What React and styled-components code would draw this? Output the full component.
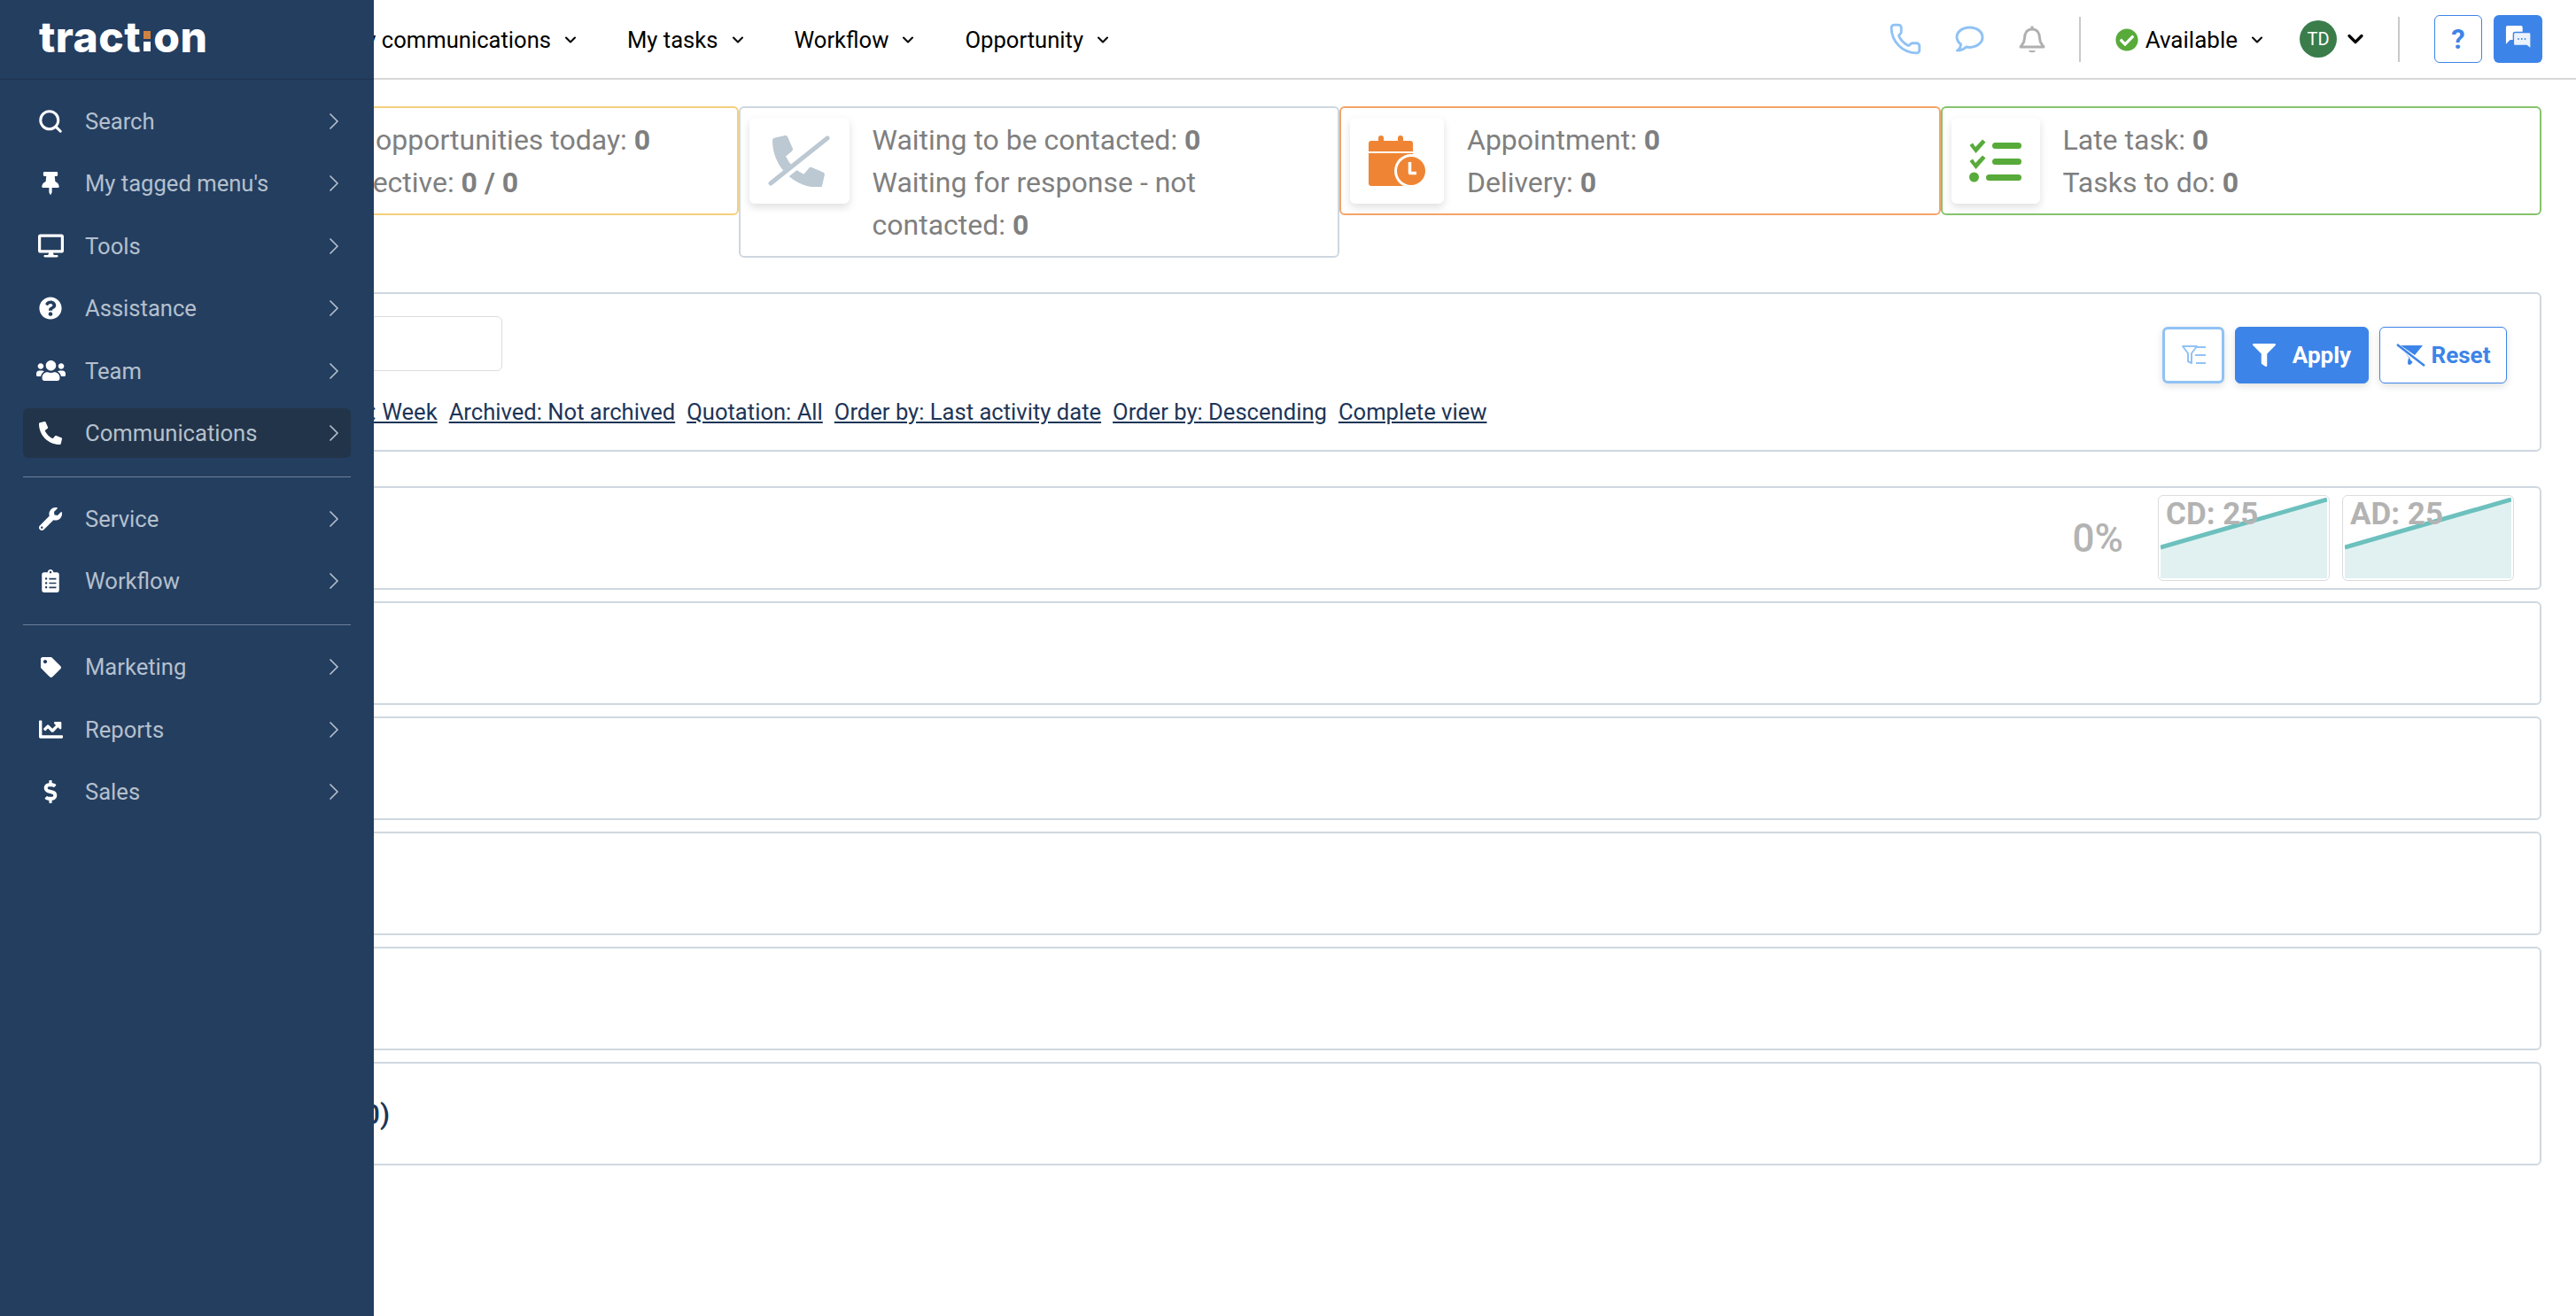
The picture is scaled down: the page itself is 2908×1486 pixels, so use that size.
import React from "react";
import styled, { createGlobalStyle } from "styled-components";
import {
  FaThumbtack,
  FaDesktop,
  FaQuestionCircle,
  FaUsers,
  FaPhoneAlt,
  FaWrench,
  FaClipboardList,
  FaTag,
  FaChartLine,
  FaDollarSign,
  FaFilter,
  FaCheckCircle,
} from "react-icons/fa";
import { ChevronRight, ChevronDown, Phone, Search } from "lucide-react";

const GlobalStyle = createGlobalStyle`
  html, body {
    margin: 0;
    padding: 0;
    background: #fff;
    font-family: Roboto, "Liberation Sans", sans-serif;
    overflow: hidden;
  }
`;

const Page = styled.div`
  position: relative;
  height: 100vh;
  overflow: hidden;
`;

/* sidebar drawer, lies over the page */
const Sidebar = styled.aside`
  position: absolute;
  top: 0;
  left: 0;
  bottom: 0;
  width: 422px;
  background: #243e60;
  z-index: 5;
`;

const LogoBar = styled.div`
  height: 90px;
  box-sizing: border-box;
  border-bottom: 1px solid #20344f;
  padding: 17px 0 0 44px;
`;

const Logo = styled.div`
  font-family: Inter, sans-serif;
  font-weight: 800;
  font-size: 48px;
  line-height: 50px;
  letter-spacing: 0.5px;
  color: #fff;
`;

const LogoI = styled.span`
  position: relative;
  color: transparent;

  &::before {
    content: "";
    position: absolute;
    left: 3px;
    top: 23px;
    width: 8px;
    height: 9px;
    background: #cf8240;
  }

  &::after {
    content: "";
    position: absolute;
    left: 3px;
    top: 35px;
    width: 8px;
    height: 11px;
    background: #fff;
  }
`;

const Menu = styled.nav`
  padding: 19px 26px 0;
`;

const MenuRow = styled.div`
  display: flex;
  align-items: center;
  height: 56px;
  margin-bottom: 14.4px;
  padding: 0 3px 0 11px;
  border-radius: 6px;
  background: ${(p) => (p.$active ? "#223449" : "transparent")};
  color: #b4c0cd;
  font-size: 25.6px;
`;

const MenuIcon = styled.span`
  display: flex;
  justify-content: center;
  width: 40px;
  margin-right: 19px;
  color: #fff;
`;

const MenuArrow = styled.span`
  display: flex;
  margin-left: auto;
  color: #b4c0cd;
`;

const MenuDivider = styled.div`
  height: 1px;
  background: #6c8098;
  margin: 21px 0 19px;
`;

const Header = styled.header`
  display: flex;
  align-items: center;
  height: 90px;
  box-sizing: border-box;
  border-bottom: 2px solid #d8d8d8;
  padding: 2px 38px 0 390px;
`;

const NavItem = styled.div`
  display: flex;
  align-items: center;
  gap: 12px;
  margin-right: 54px;
  color: #000;
  font-size: 25.6px;
`;

const HeaderRight = styled.div`
  display: flex;
  align-items: center;
  margin-left: auto;
  margin-top: -2px;
`;

const HeadIcon = styled.span`
  display: flex;
  color: ${(p) => p.$color};
  margin-right: ${(p) => p.$mr}px;
`;

const VSep = styled.div`
  width: 2px;
  height: 51px;
  background: #c9c9c9;
  margin: 0 ${(p) => p.$mr}px 0 ${(p) => p.$ml}px;
`;

const Status = styled.div`
  display: flex;
  align-items: center;
  padding-top: 2px;
  color: #000;
  font-size: 26px;
`;

const Avatar = styled.div`
  display: flex;
  align-items: center;
  justify-content: center;
  width: 42px;
  height: 42px;
  border-radius: 50%;
  background: #3a7d4b;
  color: #fff;
  font-size: 20px;
  margin: 0 7px 0 38px;
`;

const HelpButton = styled.div`
  display: flex;
  align-items: center;
  justify-content: center;
  width: 54px;
  height: 54px;
  box-sizing: border-box;
  border: 1.5px solid #3d84e8;
  border-radius: 6px;
  color: #3d84e8;
  font-size: 31px;
  font-weight: 700;
`;

const ChatButton = styled.div`
  display: flex;
  align-items: center;
  justify-content: center;
  width: 55px;
  height: 54px;
  margin-left: 13px;
  border-radius: 6px;
  background: #3d84e8;
`;

const Content = styled.main`
  padding: 30px 39px 0 155px;
`;

const Cards = styled.section`
  display: grid;
  grid-template-columns: repeat(4, 1fr);
  align-items: start;
`;

const Card = styled.div`
  display: flex;
  align-items: flex-start;
  box-sizing: border-box;
  padding: 11px 11px 11px 10px;
  border: 2px solid ${(p) => p.$color};
  border-radius: 6px;
`;

const IconBox = styled.div`
  display: flex;
  align-items: center;
  justify-content: center;
  flex: 0 0 ${(p) => p.$w}px;
  height: 97px;
  margin-right: 26px;
  background: #fff;
  border-radius: 6px;
  box-shadow: 0 4px 10px rgba(0, 0, 0, 0.13);
`;

const CardText = styled.div`
  padding-top: 1px;
  color: #7f7f7f;
  font-size: 32px;
  line-height: 48px;

  b {
    font-weight: 700;
  }
`;

const Panel = styled.section`
  margin-top: 39px;
  height: 180px;
  box-sizing: border-box;
  padding: 25px 37px 0 23px;
  border: 2px solid #cfd8e0;
  border-radius: 6px;
`;

const PanelTop = styled.div`
  display: flex;
  justify-content: space-between;
`;

const SearchInput = styled.div`
  width: 387px;
  height: 62px;
  box-sizing: border-box;
  border: 1.5px solid #dcdcdc;
  border-radius: 6px;
`;

const Buttons = styled.div`
  display: flex;
  gap: 12px;
  margin-top: 12px;
`;

const IconButton = styled.div`
  display: flex;
  align-items: center;
  justify-content: center;
  width: 70px;
  height: 64px;
  box-sizing: border-box;
  border: 3px solid #90c2f5;
  border-radius: 6px;
  box-shadow: 0 3px 8px rgba(0, 0, 0, 0.12);
`;

const ActionButton = styled.div`
  display: flex;
  align-items: center;
  justify-content: center;
  gap: ${(p) => p.$gap}px;
  width: ${(p) => p.$w}px;
  height: 64px;
  box-sizing: border-box;
  border: 1.5px solid #3d84e8;
  border-radius: 6px;
  background: ${(p) => (p.$solid ? "#3d84e8" : "#fff")};
  color: ${(p) => (p.$solid ? "#fff" : "#3d84e8")};
  font-size: 26px;
  font-weight: 700;
  box-shadow: 0 3px 8px rgba(0, 0, 0, 0.12);
`;

const Links = styled.div`
  display: flex;
  gap: 13px;
  margin-top: 17px;
  padding-left: 186px;
  white-space: nowrap;
`;

const FilterLink = styled.a`
  color: #1d3557;
  font-size: 25.6px;
  line-height: 30px;
  text-decoration: underline;
`;

const Rows = styled.section`
  display: flex;
  flex-direction: column;
  gap: 13px;
  margin-top: 39px;
`;

const Row = styled.div`
  display: flex;
  align-items: center;
  height: 117px;
  box-sizing: border-box;
  padding: 0 29px 0 37px;
  border: 2px solid #cfd8e0;
  border-radius: 6px;
`;

const RowTitle = styled.div`
  color: #1d3557;
  font-size: 32px;
  font-weight: 500;
`;

const Percent = styled.div`
  margin-left: auto;
  margin-right: 39px;
  color: #b3b3b3;
  font-size: 44px;
  font-weight: 500;
`;

const Chart = styled.div`
  position: relative;
  width: 194px;
  height: 97px;
  box-sizing: border-box;
  padding: 2px;
  border: 1.5px solid #dcdcdc;
  border-radius: 6px;

  & + & {
    margin-left: 14px;
  }

  svg {
    display: block;
  }
`;

const ChartLabel = styled.span`
  position: absolute;
  left: 8px;
  top: 1px;
  color: #b3b3b3;
  font-size: 35px;
  font-weight: 700;
  line-height: 40px;
`;

const menuTop = [
  ["Search", <Search size={30} strokeWidth={2.4} />],
  ["My tagged menu's", <FaThumbtack size={26} />],
  ["Tools", <FaDesktop size={29} />],
  ["Assistance", <FaQuestionCircle size={26} />],
  ["Team", <FaUsers size={33} />],
  ["Communications", <FaPhoneAlt size={26} />, true],
];
const menuMiddle = [
  ["Service", <FaWrench size={26} />],
  ["Workflow", <FaClipboardList size={26} />],
];
const menuBottom = [
  ["Marketing", <FaTag size={23} />],
  ["Reports", <FaChartLine size={27} />],
  ["Sales", <FaDollarSign size={26} />],
];

const filters = [
  "Date: Week",
  "Archived: Not archived",
  "Quotation: All",
  "Order by: Last activity date",
  "Order by: Descending",
  "Complete view",
];

const PHONE =
  "M497.39 361.8l-112-48a24 24 0 0 0-28 6.9l-49.6 60.6A370.66 370.66 0 0 1 130.6 204.11l60.6-49.6a23.94 23.94 0 0 0 6.9-28l-48-112A24.16 24.16 0 0 0 122.6.61l-104 24A24 24 0 0 0 0 48c0 256.5 207.9 464 464 464a24 24 0 0 0 23.4-18.6l24-104a24.29 24.29 0 0 0-14.01-27.6z";

function PhoneSlashIcon() {
  return (
    <svg width="70" height="58" viewBox="0 0 70 58">
      <g transform="translate(5 0) scale(0.115)">
        <path d={PHONE} fill="#bcc8d2" />
      </g>
      <path d="M3 57 L68 5" stroke="#fff" strokeWidth="9" />
      <path d="M3 54 L67 3" stroke="#bcc8d2" strokeWidth="5" strokeLinecap="round" />
    </svg>
  );
}

function CalendarIcon() {
  return (
    <svg width="64" height="57" viewBox="0 0 64 57" fill="#ef8534">
      <rect x="11" y="0" width="6" height="10" rx="3" />
      <rect x="33" y="0" width="6" height="10" rx="3" />
      <path d="M0 18 V9 a3 3 0 0 1 3 -3 H47 a3 3 0 0 1 3 3 V18 Z" />
      <path d="M0 20 H50 V57 H3 a3 3 0 0 1 -3 -3 Z" />
      <circle cx="48" cy="40" r="19" fill="#fff" />
      <circle cx="48" cy="40" r="16" />
      <path d="M46.5 30 V42.5 H54" stroke="#fff" strokeWidth="3.5" fill="none" strokeLinejoin="round" />
    </svg>
  );
}

function TasksIcon() {
  return (
    <svg width="59" height="50" viewBox="0 0 59 50" fill="#58ab3a">
      <path d="M0.5 7 L4 4.5 L7 9 L15 0.5 L18.5 3.5 L7.5 16 Z" />
      <path d="M0.5 25 L4 22.5 L7 27 L15 18.5 L18.5 21.5 L7.5 34 Z" />
      <circle cx="5.5" cy="43" r="5.5" />
      <rect x="26" y="4" width="33" height="7" rx="3.5" />
      <rect x="26" y="22" width="33" height="7" rx="3.5" />
      <rect x="19" y="40" width="40" height="7" rx="3.5" />
    </svg>
  );
}

function ChatBubble() {
  return (
    <svg width="30" height="32" viewBox="0 0 32 34" fill="none">
      <path d="M3 1 H19 a2 2 0 0 1 2 2 V16 a2 2 0 0 1 -2 2 H6 L1 23 V3 a2 2 0 0 1 2 -2 Z" fill="#fff" />
      <path d="M12 9 H29 a2 2 0 0 1 2 2 V29 L26 25 H12 a2 2 0 0 1 -2 -2 V11 a2 2 0 0 1 2 -2 Z" fill="#eaf2fd" stroke="#3d84e8" strokeWidth="1.5" />
      <circle cx="16" cy="17" r="1" fill="#3d84e8" />
      <circle cx="20" cy="17" r="1" fill="#3d84e8" />
      <circle cx="24" cy="17" r="1" fill="#3d84e8" />
    </svg>
  );
}

function SpeechIcon() {
  return (
    <svg width="33" height="30" viewBox="0 0 33 30" fill="none" stroke="#90c2f5" strokeWidth="3" strokeLinejoin="round">
      <path d="M16.5 2 C8 2 2 7 2 13 C2 16.5 4 19 6.5 21 C6.3 24 4.5 27 2.5 28 C7 28 10.5 26 12.5 24 C14 24.3 15 24.4 16.5 24.4 C25 24.4 31 19 31 13 C31 7 25 2 16.5 2 Z" />
    </svg>
  );
}

function BellIcon() {
  return (
    <svg width="30" height="33" viewBox="0 0 30 33" fill="none" stroke="#b0b0b0" strokeWidth="3" strokeLinejoin="round">
      <path d="M15 1.5 V5 C9 5 6.5 10 6.5 15 C6.5 20 4 22 2 25 H28 C26 22 23.5 20 23.5 15 C23.5 10 21 5 15 5" />
      <path d="M11 29 H19 C18.5 32 11.5 32 11 29 Z" fill="#b0b0b0" stroke="none" />
    </svg>
  );
}

function FilterListIcon() {
  return (
    <svg width="27" height="23" viewBox="0 0 27 23" fill="none" stroke="#90c2f5" strokeWidth="2">
      <path d="M1 1 H17 L11 9 V20 L7 18 V9 Z" strokeLinejoin="round" />
      <path d="M17 2 H27 M15 11 H27 M16 20 H27" />
    </svg>
  );
}

function FilterOffIcon() {
  return (
    <svg width="33" height="26" viewBox="0 0 33 26">
      <path d="M5 2 H30 L21 13 Z" fill="#3d84e8" />
      <path d="M9 9 L16 17 L16 18 Z" fill="#3d84e8" />
      <path d="M14 16 L18.5 21 C16 25 13 25 13 21 Z" fill="#3d84e8" />
      <path d="M1 1 L32 25" stroke="#3d84e8" strokeWidth="2.5" />
    </svg>
  );
}

function MiniChart({ label }) {
  return (
    <Chart>
      <svg width="188" height="91" viewBox="0 0 188 91">
        <path d="M0 56 L188 2 V91 H0 Z" fill="#e1f1f1" />
        <path d="M0 56 L188 2" stroke="#6cc0bd" strokeWidth="5" />
      </svg>
      <ChartLabel>{label}</ChartLabel>
    </Chart>
  );
}

function MenuGroup({ items }) {
  return items.map(([name, icon, active]) => (
    <MenuRow key={name} $active={active}>
      <MenuIcon>{icon}</MenuIcon>
      {name}
      <MenuArrow>
        <ChevronRight size={32} strokeWidth={1.3} />
      </MenuArrow>
    </MenuRow>
  ));
}

function App() {
  return (
    <Page>
      <GlobalStyle />
      <Sidebar>
        <LogoBar>
          <Logo>
            tract<LogoI>i</LogoI>on
          </Logo>
        </LogoBar>
        <Menu>
          <MenuGroup items={menuTop} />
          <MenuDivider />
          <MenuGroup items={menuMiddle} />
          <MenuDivider />
          <MenuGroup items={menuBottom} />
        </Menu>
      </Sidebar>

      <Header>
        {["My communications", "My tasks", "Workflow", "Opportunity"].map((item) => (
          <NavItem key={item}>
            {item}
            <ChevronDown size={20} strokeWidth={2.5} />
          </NavItem>
        ))}
        <HeaderRight>
          <HeadIcon $color="#90c2f5" $mr={37}>
            <Phone size={38} strokeWidth={1.8} />
          </HeadIcon>
          <HeadIcon $mr={39}>
            <SpeechIcon />
          </HeadIcon>
          <HeadIcon>
            <BellIcon />
          </HeadIcon>
          <VSep $ml={38} $mr={39} />
          <Status>
            <HeadIcon $color="#58ab3a" $mr={8}>
              <FaCheckCircle size={26} />
            </HeadIcon>
            Available
            <HeadIcon $color="#000">
              <ChevronDown size={20} strokeWidth={2.5} style={{ marginLeft: 12 }} />
            </HeadIcon>
          </Status>
          <Avatar>TD</Avatar>
          <HeadIcon $color="#000">
            <ChevronDown size={28} strokeWidth={2.8} />
          </HeadIcon>
          <VSep $ml={34} $mr={39} />
          <HelpButton>?</HelpButton>
          <ChatButton>
            <ChatBubble />
          </ChatButton>
        </HeaderRight>
      </Header>

      <Content>
        <Cards>
          <Card $color="#f4d07c">
            <IconBox $w={180} />
            <CardText>
              My opportunities today: <b>0</b>
              <br />
              Objective: <b>0 / 0</b>
            </CardText>
          </Card>
          <Card $color="#ced7df">
            <IconBox $w={113}>
              <PhoneSlashIcon />
            </IconBox>
            <CardText>
              Waiting to be contacted: <b>0</b>
              <br />
              Waiting for response - not
              <br />
              contacted: <b>0</b>
            </CardText>
          </Card>
          <Card $color="#f3a468">
            <IconBox $w={106}>
              <CalendarIcon />
            </IconBox>
            <CardText>
              Appointment: <b>0</b>
              <br />
              Delivery: <b>0</b>
            </CardText>
          </Card>
          <Card $color="#86c36d">
            <IconBox $w={100}>
              <TasksIcon />
            </IconBox>
            <CardText>
              Late task: <b>0</b>
              <br />
              Tasks to do: <b>0</b>
            </CardText>
          </Card>
        </Cards>

        <Panel>
          <PanelTop>
            <SearchInput />
            <Buttons>
              <IconButton>
                <FilterListIcon />
              </IconButton>
              <ActionButton $solid $w={151} $gap={19}>
                <FaFilter size={26} />
                Apply
              </ActionButton>
              <ActionButton $w={144} $gap={7}>
                <FilterOffIcon />
                Reset
              </ActionButton>
            </Buttons>
          </PanelTop>
          <Links>
            {filters.map((f) => (
              <FilterLink key={f}>{f}</FilterLink>
            ))}
          </Links>
        </Panel>

        <Rows>
          <Row>
            <Percent>0%</Percent>
            <MiniChart label="CD: 25" />
            <MiniChart label="AD: 25" />
          </Row>
          <Row />
          <Row />
          <Row />
          <Row />
          <Row>
            <RowTitle>Closed or lost (0)</RowTitle>
          </Row>
        </Rows>
      </Content>
    </Page>
  );
}

export default App;
